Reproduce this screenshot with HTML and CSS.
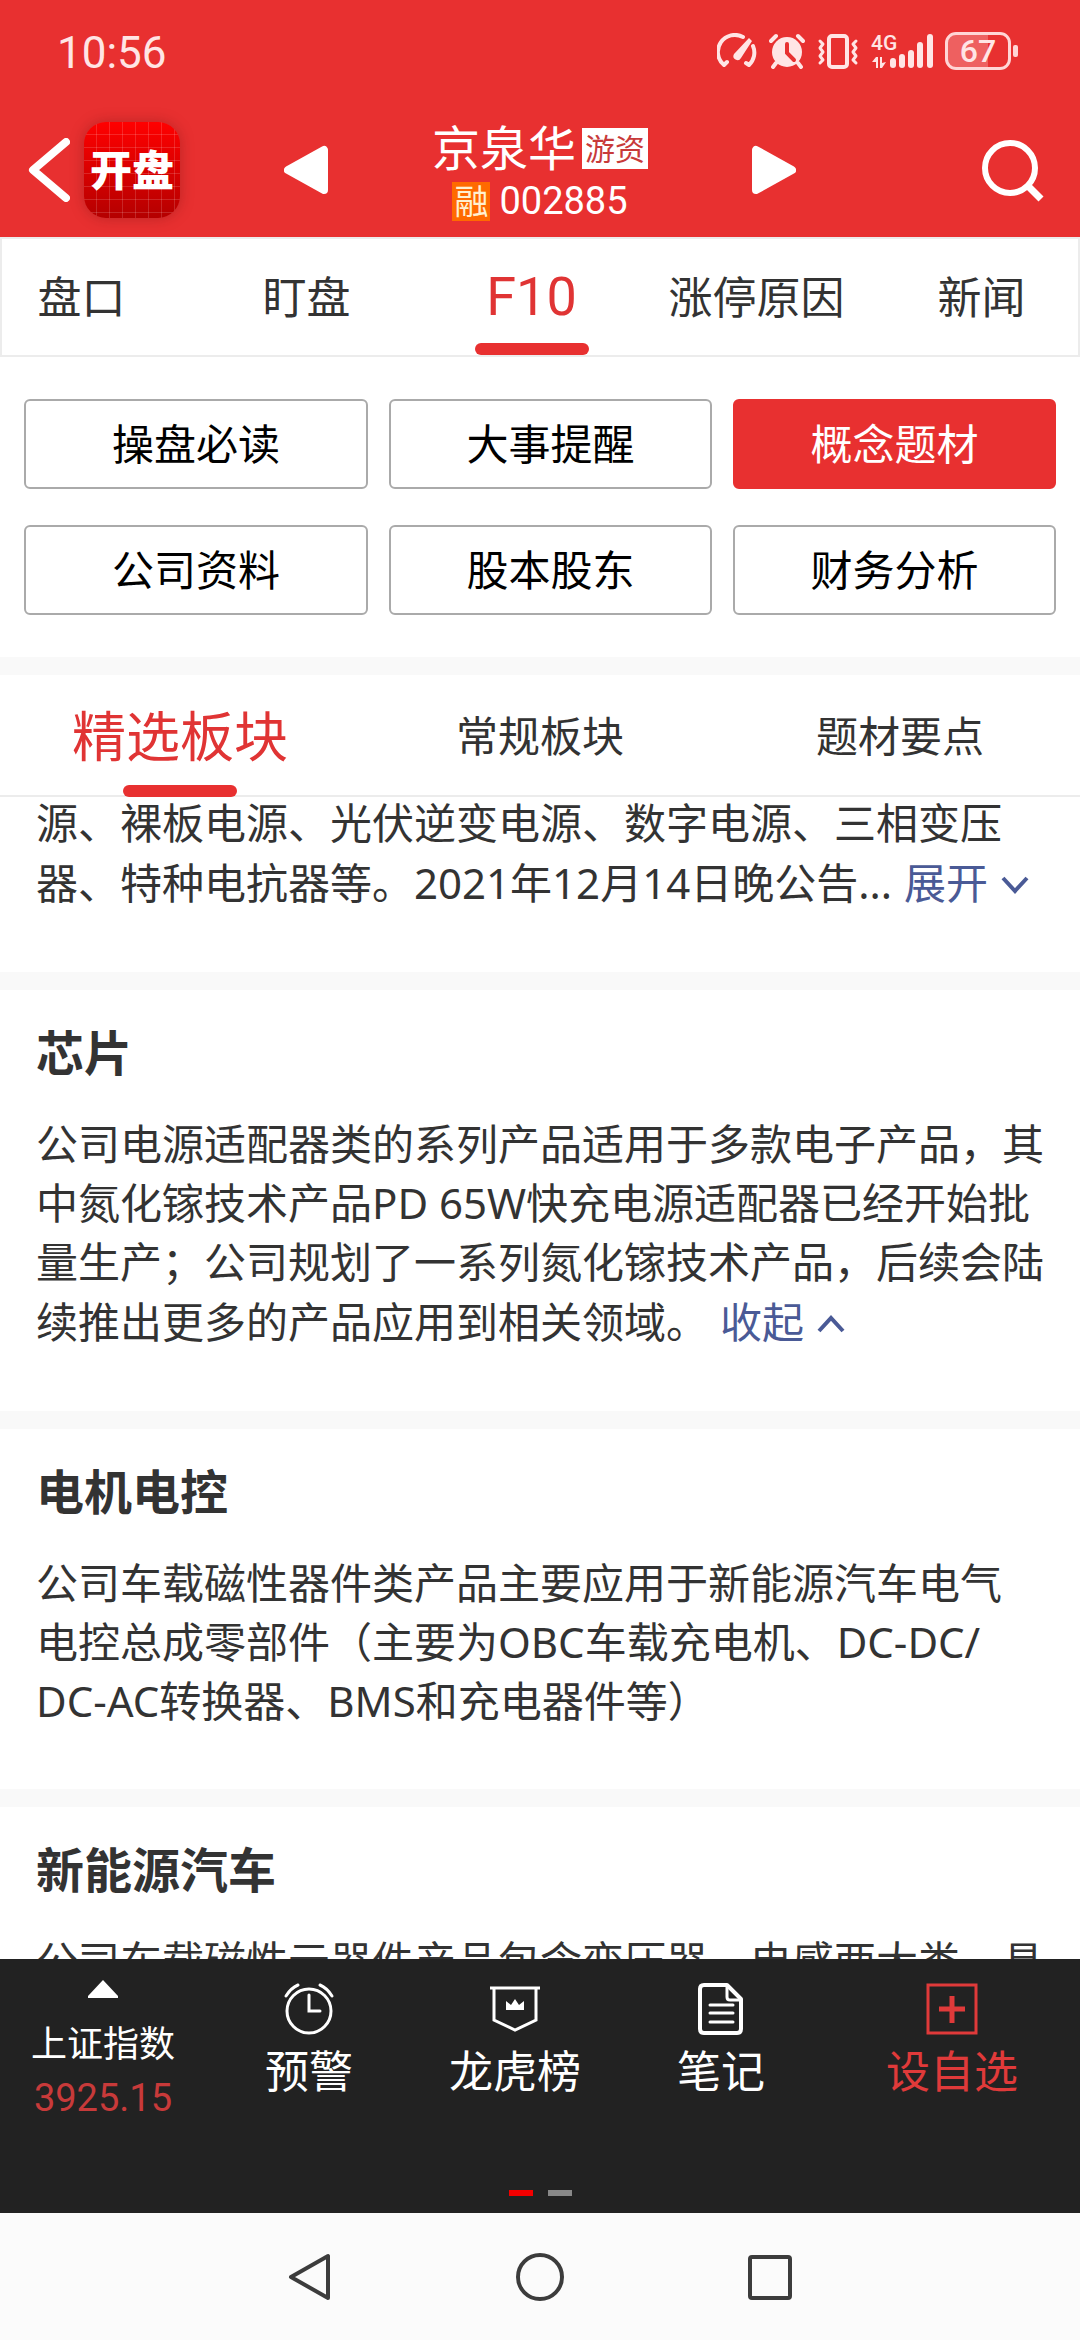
FILE: index.html
```
<!DOCTYPE html>
<html lang="zh-CN">
<head>
  <meta charset="UTF-8">
  <meta name="viewport" content="width=device-width, initial-scale=1">
  <title>京泉华 002885</title>
  <link rel="stylesheet" href="styles.css">
</head>
<body>

  <!-- Status bar -->
  <div class="status-bar">
    <span class="clock">10:56</span>
    <div class="status-icons">
      <svg width="40" height="36" viewBox="0 0 40 36" fill="none" stroke="#ffe5e5" stroke-width="4" stroke-linecap="round" stroke-linejoin="round">
        <path d="M10 29 L7 32 A17 17 0 0 1 26 4"/>
        <path d="M36 13 A17 17 0 0 1 32 32 L29 30"/>
        <path d="M32 5 L35 8 L24 25 A4 4 0 1 1 17 21 Z" fill="#ffe5e5" stroke="none"/>
      </svg>
      <svg width="36" height="36" viewBox="0 0 36 36" fill="none" stroke="#ffe5e5" stroke-width="4" stroke-linecap="round">
        <circle cx="18" cy="19" r="15" fill="#ffe5e5" stroke="none"/>
        <path d="M2 8 L7 3 M34 8 L29 3 M7 30 L4 34 M29 30 L32 34"/>
        <path d="M18 11 V20 L25 27" stroke="#e83030"/>
      </svg>
      <svg width="42" height="36" viewBox="0 0 42 36" fill="none" stroke="#ffe5e5" stroke-width="4" stroke-linejoin="round" stroke-linecap="round">
        <rect x="12" y="3" width="18" height="31" rx="3"/>
        <path d="M3 8 L6 11 L3 15 L6 19 L3 23 L6 27 L3 30" stroke-width="3"/>
        <path d="M39 8 L36 11 L39 15 L36 19 L39 23 L36 27 L39 30" stroke-width="3"/>
      </svg>
      <svg width="62" height="36" viewBox="0 0 62 36" fill="#ffe5e5">
        <text class="net-label" x="0" y="17">4G</text>
        <path d="M1 29 L5 24 H7 V35 H5 V29 Z M9 24 H11 V30 L15 29 L11 35 H9 Z"/>
        <rect x="19" y="25" width="6" height="10" rx="3"/>
        <rect x="28" y="21" width="6" height="14" rx="3"/>
        <rect x="37" y="17" width="6" height="18" rx="3"/>
        <rect x="46" y="9" width="6" height="26" rx="3"/>
        <rect x="56" y="1" width="6" height="34" rx="3"/>
      </svg>
      <div class="battery"><span>67</span></div>
    </div>
  </div>

  <!-- Stock header -->
  <header class="stock-header">
    <div class="header-left">
      <button type="button" class="icon-btn" aria-label="返回">
        <svg width="42" height="64" viewBox="0 0 42 64" fill="none" stroke="#fff" stroke-width="8" stroke-linecap="round" stroke-linejoin="round">
          <path d="M38 4 L5 32 L38 60"/>
        </svg>
      </button>
      <span class="logo">开盘</span>
    </div>
    <div class="stock-switch">
      <button type="button" class="icon-btn" aria-label="上一只">
        <svg width="44" height="50" viewBox="0 0 44 50" fill="#fff" stroke="#fff" stroke-width="8" stroke-linejoin="round">
          <path d="M40 5 V45 L4 25 Z"/>
        </svg>
      </button>
      <div class="stock-title">
        <h1>京泉华<span class="tag">游资</span></h1>
        <p><span class="margin-tag">融</span>002885</p>
      </div>
      <button type="button" class="icon-btn" aria-label="下一只">
        <svg width="44" height="50" viewBox="0 0 44 50" fill="#fff" stroke="#fff" stroke-width="8" stroke-linejoin="round">
          <path d="M4 5 V45 L40 25 Z"/>
        </svg>
      </button>
    </div>
    <button type="button" class="icon-btn search" aria-label="搜索">
      <svg width="62" height="64" viewBox="0 0 62 64" fill="none" stroke="#fff" stroke-width="6">
        <circle cx="28" cy="30" r="25"/>
        <path d="M46 48 L59 61" stroke-width="7"/>
      </svg>
    </button>
  </header>

  <!-- Main tabs -->
  <nav class="tabs">
    <div class="tabs-track">
      <a href="#">盘口</a>
      <a href="#">盯盘</a>
      <a href="#" class="active">F10</a>
      <a href="#">涨停原因</a>
      <a href="#">新闻</a>
    </div>
  </nav>

  <div class="f10-menu">
    <button type="button">操盘必读</button>
    <button type="button">大事提醒</button>
    <button type="button" class="active">概念题材</button>
    <button type="button">公司资料</button>
    <button type="button">股本股东</button>
    <button type="button">财务分析</button>
  </div>

  <nav class="sub-tabs">
    <a href="#" class="active">精选板块</a>
    <a href="#">常规板块</a>
    <a href="#">题材要点</a>
  </nav>

  <!-- Concept list -->
  <main class="content">
    <div class="topic-list">
      <section class="topic continued">
        <p>源、裸板电源、光伏逆变电源、数字电源、三相变压<br>器、特种电抗器等。2021年12月14日晚公告...<a href="#" class="more">展开<svg width="30" height="20" viewBox="0 0 30 20"><path d="M3 3 L15 16 L27 3"/></svg></a></p>
      </section>

      <section class="topic">
        <h2>芯片</h2>
        <p>公司电源适配器类的系列产品适用于多款电子产品，其<br>中氮化镓技术产品PD 65W快充电源适配器已经开始批<br>量生产；公司规划了一系列氮化镓技术产品，后续会陆<br>续推出更多的产品应用到相关领域。<a href="#" class="more">收起<svg width="30" height="20" viewBox="0 0 30 20"><path d="M3 17 L15 4 L27 17"/></svg></a></p>
      </section>

      <section class="topic">
        <h2>电机电控</h2>
        <p>公司车载磁性器件类产品主要应用于新能源汽车电气<br>电控总成零部件（主要为OBC车载充电机、DC-DC/<br>DC-AC转换器、BMS和充电器件等）</p>
      </section>

      <section class="topic">
        <h2>新能源汽车</h2>
        <p>公司车载磁性元器件产品包含变压器、电感两大类，具</p>
      </section>
    </div>
  </main>

  <!-- Bottom toolbar -->
  <footer class="toolbar">
    <div class="toolbar-items">
      <a href="#" class="index">
        <svg width="30" height="18" viewBox="0 0 30 18" fill="#fff"><path d="M15 0 L30 16 V18 H0 V16 Z"/></svg>
        <span class="index-name">上证指数</span>
        <span class="index-value">3925.15</span>
      </a>
      <a href="#">
        <svg width="52" height="52" viewBox="0 0 52 52" fill="none" stroke="#fff" stroke-width="3" stroke-linecap="round">
          <circle cx="26" cy="28" r="22"/>
          <path d="M26 12 V28 H37"/>
          <path d="M3 13 Q8 5 15 2 M49 13 Q44 5 37 2"/>
        </svg>
        <span>预警</span>
      </a>
      <a href="#">
        <svg width="52" height="52" viewBox="0 0 52 52" fill="none" stroke="#fff" stroke-width="3">
          <path d="M1 5 H51 M5 5 V37 L26 47 L47 37 V5"/>
          <path d="M17 27 V18 L22 22 L26 16 L30 22 L35 18 V27 Z" fill="#fff" stroke="none"/>
        </svg>
        <span>龙虎榜</span>
      </a>
      <a href="#">
        <svg width="52" height="52" viewBox="0 0 52 52" fill="none" stroke="#fff" stroke-width="4" stroke-linejoin="round" stroke-linecap="round">
          <path d="M9 2 H32 L46 16 V46 Q46 50 42 50 H9 Q5 50 5 46 V6 Q5 2 9 2 Z"/>
          <path d="M32 3 V14 Q32 17 35 17 H45" stroke-width="3"/>
          <path d="M15 22 H38 M15 30 H38 M15 39 H38" stroke-width="3"/>
        </svg>
        <span>笔记</span>
      </a>
      <a href="#" class="add">
        <svg width="52" height="52" viewBox="0 0 52 52" fill="none" stroke="#e03a3a">
          <rect x="2" y="2" width="48" height="48" stroke-width="3"/>
          <path d="M26 13 V40 M13 26 H39" stroke-width="5"/>
        </svg>
        <span>设自选</span>
      </a>
    </div>
    <div class="pager">
      <span class="current"></span>
      <span></span>
    </div>
  </footer>

  <!-- System navigation -->
  <div class="system-nav">
    <svg width="48" height="50" viewBox="0 0 48 50"><path d="M42 4 V46 L5 25 Z"/></svg>
    <svg width="48" height="50" viewBox="0 0 48 50"><circle cx="24" cy="25" r="22"/></svg>
    <svg width="48" height="50" viewBox="0 0 48 50"><rect x="4" y="5" width="40" height="41" rx="2"/></svg>
  </div>

</body>
</html>
```
FILE: styles.css
```
* {
  box-sizing: border-box;
  margin: 0;
  padding: 0;
}

body {
  display: flex;
  flex-direction: column;
  height: 100vh;
  overflow: hidden;
  font-family: "Noto Sans", "Noto Sans CJK SC", sans-serif;
  font-size: 42px;
  line-height: 60px;
  color: #333;
  background-color: #fff;
}

a {
  color: inherit;
  text-decoration: none;
}

button {
  font-family: inherit;
  font-size: 42px;
  line-height: 60px;
  cursor: pointer;
}

svg {
  display: block;
  flex: none;
}

/* Status bar */
.status-bar {
  display: flex;
  flex: none;
  align-items: center;
  justify-content: space-between;
  height: 102px;
  padding: 0 62px 0 57px;
  background-color: #e83030;
  color: #ffe5e5;
}

.clock {
  padding-top: 4px;
  font-family: Roboto, sans-serif;
  font-size: 44px;
}

.status-icons {
  display: flex;
  align-items: center;
  gap: 12px;
}

.net-label {
  font-family: Roboto, sans-serif;
  font-size: 21px;
  font-weight: 500;
}

.battery {
  position: relative;
  width: 66px;
  height: 38px;
  margin-right: 7px;
  border: 3px solid #ffd5d5;
  border-radius: 11px;
  background: linear-gradient(to right, #ee6060 67%, #e83030 67%);
  font-family: Roboto, sans-serif;
  font-size: 32px;
  font-weight: 500;
  line-height: 32px;
  text-align: center;
}

.battery::after {
  content: "";
  position: absolute;
  top: 10px;
  right: -10px;
  width: 5px;
  height: 12px;
  border-radius: 2px;
  background-color: #ffd5d5;
}

/* Stock header */
.stock-header {
  display: grid;
  flex: none;
  grid-template-columns: 1fr 512px 1fr;
  align-items: center;
  height: 135px;
  padding: 0 28px;
  background-color: #e83030;
  color: #fff;
}

.icon-btn {
  border: none;
  background: none;
}

.header-left {
  display: flex;
  align-items: center;
  gap: 14px;
}

.logo {
  width: 96px;
  height: 96px;
  border-radius: 22px;
  background:
    repeating-linear-gradient(to right, transparent 0 12px, rgba(255,255,255,0.15) 12px 13px),
    repeating-linear-gradient(to bottom, transparent 0 12px, rgba(255,255,255,0.15) 12px 13px),
    linear-gradient(#ff0000, #b40000);
  box-shadow: 0 0 14px rgba(120,20,20,0.4);
  font-size: 42px;
  font-weight: 900;
  line-height: 96px;
  text-align: center;
}

.stock-switch {
  display: flex;
  align-items: center;
  justify-content: space-between;
}

.stock-title {
  padding-top: 6px;
}

.stock-title h1 {
  display: flex;
  align-items: center;
  gap: 6px;
  font-size: 48px;
  font-weight: 400;
  line-height: 54px;
}

.tag {
  padding: 0 3px;
  background-color: #fff;
  color: #c83a3a;
  font-size: 30px;
  line-height: 41px;
}

.stock-title p {
  display: flex;
  align-items: center;
  justify-content: center;
  gap: 9px;
  margin-top: 3px;
  font-family: Roboto, "Noto Sans CJK SC", sans-serif;
  font-size: 38px;
  line-height: 46px;
}

.margin-tag {
  padding: 0 2px;
  background-color: #ff6a00;
  color: #fff0d0;
  font-family: "Noto Sans", "Noto Sans CJK SC", sans-serif;
  font-size: 34px;
  line-height: 39px;
}

.search {
  justify-self: end;
  margin-right: 8px;
}

/* Main tabs */
.tabs {
  flex: none;
  overflow: hidden;
  border: 2px solid #ececec;
}

.tabs-track {
  display: grid;
  grid-template-columns: repeat(5, 1fr);
  height: 116px;
  margin: 0 -16px 0 -33px;
  font-size: 44px;
}

.tabs-track a,
.sub-tabs a {
  position: relative;
  display: flex;
  align-items: center;
  justify-content: center;
}

.tabs-track .active,
.sub-tabs .active {
  color: #e03434;
  font-size: 54px;
}

.tabs-track .active {
  font-family: Roboto, sans-serif;
}

.tabs-track .active::after,
.sub-tabs .active::after {
  content: "";
  position: absolute;
  bottom: 0;
  left: calc(50% - 57px);
  width: 114px;
  height: 12px;
  border-radius: 6px;
  background-color: #e83030;
}

/* F10 menu */
.f10-menu {
  display: grid;
  flex: none;
  grid-template-columns: 344fr 323fr 323fr;
  gap: 36px 21px;
  padding: 42px 24px;
  border-bottom: 18px solid #f9f9f9;
}

.f10-menu button {
  height: 90px;
  border: 2px solid #aaa;
  border-radius: 6px;
  background-color: #fff;
  color: #000;
}

.f10-menu .active {
  border-color: #e83030;
  background-color: #e83030;
  color: #fff;
}

.sub-tabs {
  display: grid;
  flex: none;
  grid-template-columns: repeat(3, 1fr);
  height: 122px;
  box-shadow: inset 0 -2px #ececec;
}

/* Concept list */
.content {
  flex: 1;
  min-height: 0;
  overflow: hidden;
}

.topic {
  padding: 30px 36px 59px;
  border-bottom: 18px solid #f9f9f9;
}

/* list is scrolled part way through this one */
.continued {
  margin-top: -4px;
  padding-top: 0;
}

.topic h2 {
  margin-bottom: 28px;
  font-size: 48px;
  line-height: 66px;
}

.topic p {
  line-height: 59px;
  white-space: nowrap;
}

.more {
  display: inline-block;
  margin-left: 12px;
  color: #4a5a96;
  line-height: 61px;
}

.more svg {
  display: inline-block;
  margin-left: 12px;
  vertical-align: 4px;
  fill: none;
  stroke: #4a5a96;
  stroke-width: 4;
}

/* Bottom toolbar */
.toolbar {
  flex: none;
  background-color: #222;
  color: #fff;
}

.toolbar-items {
  display: grid;
  grid-template-columns: repeat(4, 1fr) 256px;
  height: 231px;
}

.toolbar-items a {
  display: flex;
  flex-direction: column;
  align-items: center;
  padding-top: 24px;
  font-size: 44px;
  line-height: 72px;
}

.toolbar-items .index {
  padding-top: 21px;
  line-height: 55px;
}

.index-name {
  margin-top: 18px;
  font-size: 36px;
}

.index-value {
  color: #c83a3a;
  font-family: Roboto, sans-serif;
  font-size: 38px;
}

.toolbar-items .add {
  color: #e03a3a;
}

.pager {
  display: flex;
  justify-content: center;
  gap: 15px;
  padding-bottom: 17px;
}

.pager span {
  width: 24px;
  height: 6px;
  background-color: #888;
}

.pager .current {
  background-color: #f40000;
}

/* System navigation */
.system-nav {
  display: flex;
  flex: none;
  align-items: center;
  justify-content: center;
  gap: 182px;
  height: 127px;
  background-color: #fbfbfb;
}

.system-nav svg {
  fill: none;
  stroke: #3c3c3c;
  stroke-width: 4;
  stroke-linejoin: round;
}
```
